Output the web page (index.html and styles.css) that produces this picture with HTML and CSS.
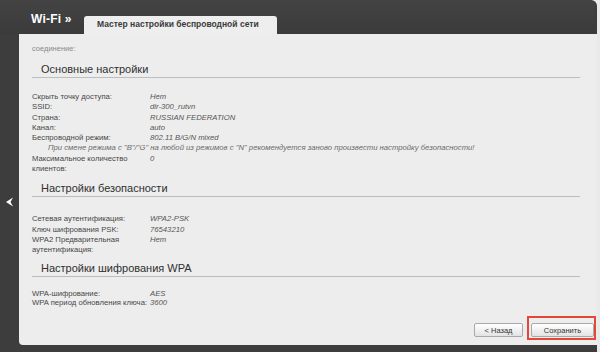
FILE: index.html
```html
<!DOCTYPE html>
<html lang="ru">
	<head>
		<meta charset="UTF-8" />
		<title>Wi-Fi - Мастер настройки беспроводной сети</title>
		<link rel="stylesheet" href="styles.css">
	</head>
	<body>
		<div class="frame">
			<div class="topbar">
				<div class="crumb">Wi-Fi »</div>
				<div class="tab">Мастер настройки беспроводной сети</div>
			</div>

			<div class="main">
				<div class="side">
					<svg class="back-arrow" width="9" height="10" viewBox="0 0 9 10" aria-hidden="true">
						<path d="M8 0.5 L1 5 L8 9.5 L5.5 5 Z" fill="#fff" />
					</svg>
				</div>

				<div class="panel">
					<div class="cut">соединение:</div>

					<div class="section sec-basic">
						<h2>Основные настройки</h2>
						<div class="rows">
							<div class="label">Скрыть точку доступа:</div>
							<div class="value">Нет</div>
							<div class="label">SSID:</div>
							<div class="value">dir-300_rutvn</div>
							<div class="label">Страна:</div>
							<div class="value">RUSSIAN FEDERATION</div>
							<div class="label">Канал:</div>
							<div class="value">auto</div>
							<div class="label">Беспроводной режим:</div>
							<div class="value">802.11 B/G/N mixed</div>
							<div class="note">При смене режима с "B"/"G" на любой из режимов с "N" рекомендуется заново произвести настройку безопасности!</div>
							<div class="label">Максимальное количество клиентов:</div>
							<div class="value">0</div>
						</div>
					</div>

					<div class="section sec-security">
						<h2>Настройки безопасности</h2>
						<div class="rows">
							<div class="label">Сетевая аутентификация:</div>
							<div class="value">WPA2-PSK</div>
							<div class="label">Ключ шифрования PSK:</div>
							<div class="value">76543210</div>
							<div class="label">WPA2 Предварительная аутентификация:</div>
							<div class="value">Нет</div>
						</div>
					</div>

					<div class="section sec-wpa">
						<h2>Настройки шифрования WPA</h2>
						<div class="rows tight">
							<div class="label">WPA-шифрование:</div>
							<div class="value">AES</div>
							<div class="label">WPA период обновления ключа:</div>
							<div class="value">3600</div>
						</div>
					</div>

					<div class="actions">
						<button class="btn">&lt; Назад</button>
						<span class="mark">
							<button class="btn btn-save">Сохранить</button>
						</span>
					</div>
				</div>
			</div>
		</div>
	</body>
</html>
```

FILE: styles.css
```css
body {
	margin: 0;
	padding: 0;
	background: #e9e9e9;
	font-family: "Liberation Sans", Arial, sans-serif;
	color: #444;
}

.frame {
	width: 597px;
	height: 352px;
	background: #3d3d3d;
	border-top-right-radius: 6px;
	display: flex;
	flex-direction: column;
}

/* Верхняя полоса с вкладкой */
.topbar {
	height: 34px;
	display: flex;
	align-items: flex-end;
	background: linear-gradient(#434343, #3b3b3b);
	border-top-right-radius: 6px;
	margin-right: 2px;
}

.crumb {
	width: 53px;
	padding-left: 31px;
	align-self: center;
	margin-top: 3px;
	color: #fff;
	font-size: 12px;
	font-weight: bold;
	letter-spacing: 0.2px;
}

.tab {
	width: 180px;
	height: 18px;
	line-height: 17px;
	padding-left: 13px;
	background: #eeeeee;
	border-radius: 3px 3px 0 0;
	color: #3a3a3a;
	font-size: 8.5px;
	font-weight: bold;
}

.main {
	flex: 1;
	display: flex;
	padding-bottom: 7px;
}

.side {
	width: 19px;
	display: flex;
	align-items: center;
	justify-content: center;
	padding-top: 25px;
}

.panel {
	flex: 1;
	background: #ededed;
	border-radius: 0 0 0 4px;
	padding: 0 17px 0 13px;
	display: flex;
	flex-direction: column;
}

.cut {
	font-size: 7.5px;
	color: #8a8a8a;
	height: 8px;
	line-height: 8px;
	margin-top: 11px;
	overflow: hidden;
}

.section h2 {
	padding-left: 9px;
	height: 16px;
	line-height: 16px;
	font-size: 11px;
	font-weight: normal;
	color: #2f2f2f;
	border-bottom: 1px solid #bdbdbd;
}

.sec-basic h2 {
	margin: 8px 0 14px 0;
}

.sec-security h2 {
	margin: 6px 0 17px 0;
}

.sec-wpa h2 {
	margin: 4px 0 12px 0;
}

.rows {
	display: grid;
	grid-template-columns: 118px 1fr;
	font-size: 7.7px;
	line-height: 10.3px;
}

.rows.tight {
	line-height: 9.5px;
}

.label {
	color: #474747;
	padding-right: 2px;
}

.value {
	color: #555;
	font-style: italic;
}

.note {
	grid-column: 1 / 3;
	padding-left: 16px;
	color: #6a6a6a;
	font-style: italic;
}

.actions {
	margin-top: auto;
	margin-bottom: 5px;
	display: flex;
	justify-content: flex-end;
	align-items: flex-end;
	gap: 4px;
	margin-right: -16px;
}

.btn {
	height: 14px;
	padding: 0;
	border: 1px solid #a9a9a9;
	border-radius: 2px;
	background: linear-gradient(#ffffff, #e3e3e3);
	font-family: "Liberation Sans", Arial, sans-serif;
	font-size: 7.5px;
	color: #333;
	width: 49px;
	margin-bottom: 3px;
}

.btn-save {
	width: 63px;
	margin-bottom: 0;
}

/* Красная рамка-выделение вокруг кнопки */
.mark {
	display: flex;
	border: 2px solid #e2483a;
	padding: 5px 0 1px 2px;
}
```
